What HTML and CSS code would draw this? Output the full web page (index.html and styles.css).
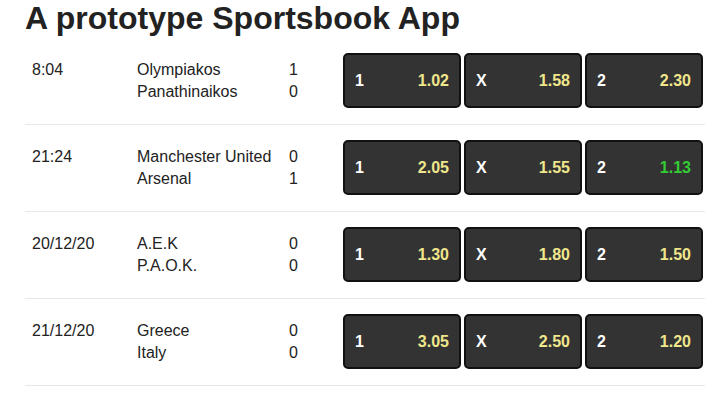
FILE: index.html
```html
<!DOCTYPE html>
<html>
<head>
<meta charset="utf-8">
<link rel="stylesheet" href="styles.css">
</head>
<body>
<div class="app">
  <h1 class="title">A prototype Sportsbook App</h1>
  <div class="events">
    <div class="event">
      <div class="time">8:04</div>
      <div class="teams"><div>Olympiakos</div><div>Panathinaikos</div></div>
      <div class="score"><div>1</div><div>0</div></div>
      <div class="odds">
        <div class="odd"><span class="label">1</span><span class="price">1.02</span></div>
        <div class="odd"><span class="label">X</span><span class="price">1.58</span></div>
        <div class="odd"><span class="label">2</span><span class="price">2.30</span></div>
      </div>
    </div>
    <div class="event">
      <div class="time">21:24</div>
      <div class="teams"><div>Manchester United</div><div>Arsenal</div></div>
      <div class="score"><div>0</div><div>1</div></div>
      <div class="odds">
        <div class="odd"><span class="label">1</span><span class="price">2.05</span></div>
        <div class="odd"><span class="label">X</span><span class="price">1.55</span></div>
        <div class="odd"><span class="label">2</span><span class="price up">1.13</span></div>
      </div>
    </div>
    <div class="event">
      <div class="time">20/12/20</div>
      <div class="teams"><div>A.E.K</div><div>P.A.O.K.</div></div>
      <div class="score"><div>0</div><div>0</div></div>
      <div class="odds">
        <div class="odd"><span class="label">1</span><span class="price">1.30</span></div>
        <div class="odd"><span class="label">X</span><span class="price">1.80</span></div>
        <div class="odd"><span class="label">2</span><span class="price">1.50</span></div>
      </div>
    </div>
    <div class="event">
      <div class="time">21/12/20</div>
      <div class="teams"><div>Greece</div><div>Italy</div></div>
      <div class="score"><div>0</div><div>0</div></div>
      <div class="odds">
        <div class="odd"><span class="label">1</span><span class="price">3.05</span></div>
        <div class="odd"><span class="label">X</span><span class="price">2.50</span></div>
        <div class="odd"><span class="label">2</span><span class="price">1.20</span></div>
      </div>
    </div>
  </div>
</div>
</body>
</html>
```
FILE: styles.css
```css
html, body {
  margin: 0;
  padding: 0;
  background: #fff;
}
body {
  font-family: "Liberation Sans", Arial, sans-serif;
  color: #222;
  font-size: 16px;
}
.app {
  padding: 0 17px 0 25px;
}
.title {
  margin: 0 0 1px 0;
  font-size: 32px;
  line-height: 37px;
  font-weight: bold;
  color: #222;
}
.event {
  display: flex;
  align-items: center;
  padding: 15px 2px 16px 7px;
  border-bottom: 1px solid #e8e8e8;
  line-height: 22px;
}
.time {
  width: 105px;
  margin-bottom: 22px;
}
.teams {
  width: 152px;
}
.score {
  width: 54px;
}
.odds {
  flex: 1;
  display: grid;
  grid-template-columns: repeat(3, 1fr);
  gap: 3px;
}
.odd {
  height: 55px;
  box-sizing: border-box;
  background: #333;
  border: 2px solid #111;
  border-radius: 5px;
  display: flex;
  align-items: center;
  justify-content: space-between;
  padding: 0 10px 0 10px;
  font-weight: bold;
  color: #fff;
}
.price {
  color: #f0e68c;
}
.price.up {
  color: #33cc33;
}
```
